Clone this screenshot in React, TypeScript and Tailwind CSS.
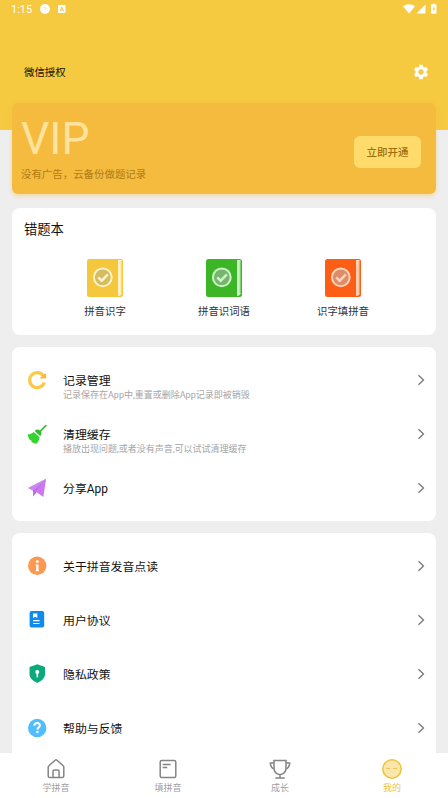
import type { ReactNode } from "react";
import { clsx } from "clsx";
import { MdSettings } from "react-icons/md";

type Row = { title: string; hint?: string; icon: ReactNode };

const RecordIcon = () => (
  <svg width="20" height="20" viewBox="0 0 20 20" fill="none">
    <path d="M17.300 12.400A7.500 7.500 0 1 1 16.300 5.800" stroke="#fbc945" strokeWidth="3.200" />
    <path d="M16 4.600 19.200 3.600v5h-6.400z" fill="#fbb940" />
  </svg>
);

const BroomIcon = () => (
  <svg width="20" height="20" viewBox="0 0 20 20">
    <path d="M18.800 1.600 12.800 7.800" stroke="#43b83c" strokeWidth="1.700" strokeLinecap="round" />
    <path d="M7.700 7c1.600-1.900 3.600-2 5.300-.4s1.900 3.600.4 5.600z" fill="#2fbe2f" />
    <path d="M6.800 7.900 12.600 13.200c-.2 2.400-1.400 4.700-3.200 6.600-2.300-.4-4-1.300-5.400-2.600l.9-1.500-1.700.7C1.900 14.600 1 12.400.8 10.200c2.300 0 4.300-.7 6-2.300z" fill="#35d32f" />
  </svg>
);

const ShareIcon = () => (
  <svg width="20" height="20" viewBox="0 0 20 20">
    <path d="M19.200.6.800 10.100l5.200 2.700z" fill="#cf82f3" />
    <path d="M19.200.6 6 12.600v5.900l3.200-3.800z" fill="#b96ce6" />
    <path d="M19.200.6 8.500 13.500l7.800 5.400z" fill="#c978ef" />
  </svg>
);

const InfoIcon = () => (
  <svg width="20" height="20" viewBox="0 0 20 20">
    <circle cx="10.200" cy="9.800" r="9.200" fill="#fc9850" />
    <circle cx="10.300" cy="5.600" r="1.500" fill="#fff" />
    <path d="M8.500 8.400h3v5.800h.6v1H8.700v-1h.5V9.400h-.7z" fill="#fff" />
  </svg>
);

const AgreementIcon = () => (
  <svg width="20" height="20" viewBox="0 0 20 20">
    <rect x="2.600" y="1" width="14.600" height="16.500" rx="2" fill="#0f8bee" />
    <path d="M6 3.600h4.300v4.500L8.200 6.700 6 8.100z" fill="#fff" />
    <path d="M6 10.700h6.500M6 13.500h6.500" stroke="#fff" strokeWidth="1.200" />
  </svg>
);

const PrivacyIcon = () => (
  <svg width="20" height="20" viewBox="0 0 20 20">
    <path d="m10.300.2 7.700 2.900v7.200c0 3.700-3.300 6.800-7.700 8.600-4.500-1.800-7.800-4.900-7.800-8.600V3.100z" fill="#0ca97c" />
    <circle cx="10.300" cy="7.900" r="2" fill="#fff" />
    <path d="M10.300 8v5.300" stroke="#fff" strokeWidth="1.500" />
  </svg>
);

const HelpIcon = () => (
  <svg width="20" height="20" viewBox="0 0 20 20" fill="none">
    <circle cx="10.200" cy="9.900" r="9.200" fill="#52bdfd" />
    <path d="M7.300 7.700c.1-3.600 5.900-3.400 5.600-.1-.2 1.900-2.500 1.800-2.500 4" stroke="#fff" strokeWidth="2" />
    <circle cx="10.400" cy="14" r="1.200" fill="#fff" />
  </svg>
);

const dataRows: Row[] = [
  { title: "记录管理", hint: "记录保存在App中,重置或删除App记录即被销毁", icon: <RecordIcon /> },
  { title: "清理缓存", hint: "播放出现问题,或者没有声音,可以试试清理缓存", icon: <BroomIcon /> },
  { title: "分享App", icon: <ShareIcon /> },
];

const aboutRows: Row[] = [
  { title: "关于拼音发音点读", icon: <InfoIcon /> },
  { title: "用户协议", icon: <AgreementIcon /> },
  { title: "隐私政策", icon: <PrivacyIcon /> },
  { title: "帮助与反馈", icon: <HelpIcon /> },
];

const books = [
  { label: "拼音识字", color: "#f5c73c", disc: "#d3bc62", page: "#fff2c9" },
  { label: "拼音识词语", color: "#3cb527", disc: "#76b570", page: "#cdf5c5" },
  { label: "识字填拼音", color: "#fd5e16", disc: "#dc8d6c", page: "#ffd3b8" },
];

const tabs = [
  {
    label: "学拼音",
    icon: <path d="M3.200 9.200c0-.6.200-1 .7-1.400l6.200-5.600c.6-.6 1.300-.6 1.900 0l6.200 5.600c.4.4.6.800.6 1.400v8.700c0 1-.6 1.600-1.600 1.600H4.800c-1 0-1.600-.6-1.600-1.600zM8 19.300v-6c0-.9.500-1.400 1.400-1.400h3.300c.9 0 1.400.5 1.400 1.400v6" />,
  },
  {
    label: "填拼音",
    icon: <path d="M4.700 2.600h12.600c.9 0 1.500.6 1.500 1.500v13.800c0 .9-.6 1.500-1.500 1.500H4.700c-.9 0-1.500-.6-1.500-1.500V4.100c0-.9.600-1.500 1.500-1.500zM5.600 6.500h8M5.600 9.400h4.600" />,
  },
  {
    label: "成长",
    icon: <path d="M5 2.600h12v7.600c0 3.200-2.300 5.800-6 6.600-3.700-.8-6-3.400-6-6.600zM5 4.900H1.300c.1 3 1.400 5 3.900 6.300M17 4.900h3.700c-.1 3-1.400 5-3.900 6.300M11 16.800v3M6.300 20h9.400" />,
  },
  {
    label: "我的",
    active: true,
    icon: (
      <>
        <circle cx="11" cy="11" r="9.200" fill="#fbe6ac" />
        <path d="M5.400 10.400h3.600M12.400 10.400H16" strokeWidth="1" />
      </>
    ),
  },
];

function StatusBar() {
  return (
    <div className="flex h-[18px] items-center justify-between pl-[11px] pr-[11px] text-white">
      <div className="flex items-center">
        <span className="w-[29px] pt-px text-[11px] leading-[18px]">1:15</span>
        <svg width="10" height="10" viewBox="0 0 10 10">
          <circle cx="5" cy="5" r="4.900" fill="#fff" />
          <path d="M4 4.400c0-1.500 2.100-1.300 1.900-.1-.1.700-1 .7-1 1.500" stroke="#f5d778" strokeWidth=".8" fill="none" />
        </svg>
        <svg className="ml-2" width="8" height="8" viewBox="0 0 8 8">
          <rect width="7.500" height="8" rx="1" fill="#fff" />
          <path d="M2 6.300 3.800 2l1.800 4.300M2.700 5h2.200" stroke="#e6b937" strokeWidth=".8" fill="none" />
        </svg>
      </div>
      <svg width="34" height="12" viewBox="0 0 34 12" fill="#fff">
        <path d="M0 3.300c3.700-2.900 8.500-2.900 12 0L6 10.600z" />
        <path d="M13.500 10.500 22.500 1.500v9z" />
        <path d="M29.800 1.200v-.7h2v.7h.8c.5 0 .9.400.9.900v7.700c0 .5-.4.900-.9.900h-3.600c-.5 0-.9-.4-.9-.9V2.100c0-.5.400-.9.900-.9z" />
        <path d="M31.200 3.300 29.600 6.300h1v2.300l1.500-3.200h-.9z" fill="#f5c940" />
      </svg>
    </div>
  );
}

function Book({ color, disc, page }: { color: string; disc: string; page: string }) {
  return (
    <svg width="36" height="38" viewBox="0 0 36 38" fill="none">
      <rect width="36" height="38" rx="2.500" fill={color} />
      <path d="M31 1h2.500c1 0 1.500.6 1.500 1.500V33c0 2-1.500 4-4 4z" fill={page} />
      <path d="M34.300 2v32" stroke={color} strokeWidth=".7" />
      <circle cx="15.800" cy="18.300" r="8.900" fill={disc} stroke={page} strokeWidth="2" />
      <path d="m11.200 18.300 3.500 3.400 6.200-6.300" stroke={page} strokeWidth="2.400" />
    </svg>
  );
}

function RowList({ rows }: { rows: Row[] }) {
  return (
    <section className="mt-3 rounded-lg bg-white py-1.5">
      {rows.map((row) => (
        <div key={row.title} className="flex h-[54px] items-center pl-[15px] pr-2.5">
          {row.icon}
          <div className="ml-4 flex h-full flex-1 flex-col pt-[19px]">
            <span className="text-[11.900px] leading-[18px] text-[#111]">{row.title}</span>
            {row.hint && <span className="text-[9px] leading-[11px] text-[#a5a5a5]">{row.hint}</span>}
          </div>
          <svg width="9" height="12" viewBox="0 0 9 12" fill="none" stroke="#777" strokeWidth="1.300">
            <path d="m1.500 1.300 5 4.700-5 4.700" />
          </svg>
        </div>
      ))}
    </section>
  );
}

export default function App() {
  return (
    <div className="flex h-[798px] w-[448px] flex-col overflow-hidden bg-[#eeeeee] font-[Roboto,'Noto_Sans_CJK_SC',sans-serif]">
      <main className="min-h-0 flex-1 overflow-hidden">
        <header className="h-[130px] bg-[#f5c940]">
          <StatusBar />
          <div className="mt-[42px] flex h-6 items-center justify-between pl-6 pr-[18px]">
            <span className="pt-0.5 text-[10.400px] leading-6 text-[#171203]">微信授权</span>
            <MdSettings className="size-[18px] text-white" />
          </div>
        </header>

        <div className="px-3">
          <section className="relative -mt-[27px] flex h-[91px] items-center justify-between rounded-md bg-[#f5bb3f] pl-[9px] pr-[15px] shadow-[0_2px_4px_rgba(245,187,63,0.4)]">
            <div className="flex h-full flex-col">
              <span className="mt-2.5 text-[44.500px] leading-[52px] text-[#ffe29b]">VIP</span>
              <span className="mt-0.5 text-[10.450px] leading-4 text-[#ae7b13]">没有广告，云备份做题记录</span>
            </div>
            <button className="mt-[7px] h-8 w-[67px] rounded-md bg-[#ffdb6b] pt-0.5 text-[10.500px] font-medium text-[#a06f0c]">
              立即开通
            </button>
          </section>

          <section className="mt-3.5 h-[127px] rounded-lg bg-white pt-[13px]">
            <h2 className="pl-3 text-[13.300px] leading-[18px] text-[#111]">错题本</h2>
            <div className="mt-5 flex justify-center">
              {books.map(({ label, ...colors }) => (
                <div key={label} className="flex w-[119px] flex-col items-center">
                  <Book {...colors} />
                  <span className="mt-[7px] text-[10.400px] leading-4 text-[#333]">{label}</span>
                </div>
              ))}
            </div>
          </section>

          <RowList rows={dataRows} />
          <RowList rows={aboutRows} />
        </div>
      </main>

      <nav className="flex h-[45px] shrink-0 bg-white">
        {tabs.map((tab) => (
          <div
            key={tab.label}
            className={clsx("flex flex-1 flex-col items-center pt-[5px]", tab.active ? "text-[#ebc43d]" : "text-[#858585]")}
          >
            <svg width="22" height="22" viewBox="0 0 22 22" fill="none" stroke="currentColor" strokeWidth="1.500">
              {tab.icon}
            </svg>
            <span className={clsx("mt-0.5 text-[9px] leading-3", !tab.active && "text-[#a0a0a0]")}>{tab.label}</span>
          </div>
        ))}
      </nav>
    </div>
  );
}
